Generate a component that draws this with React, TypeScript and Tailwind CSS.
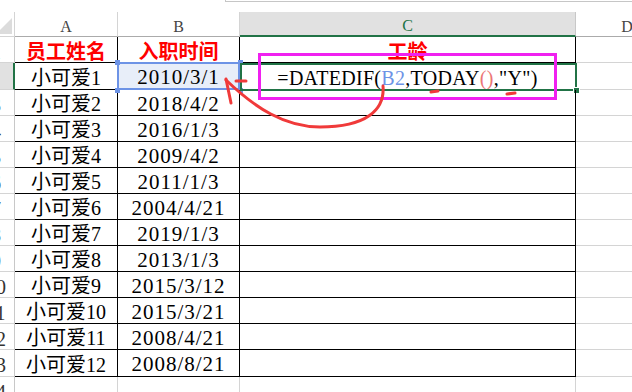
const serif = "font-['Liberation_Serif','Noto_Sans_CJK_SC',serif]";
const cjk = "font-['Noto_Sans_CJK_SC',sans-serif]";

const staff = [
  ['小可爱1', '2010/3/1'],
  ['小可爱2', '2018/4/2'],
  ['小可爱3', '2016/1/3'],
  ['小可爱4', '2009/4/2'],
  ['小可爱5', '2011/1/3'],
  ['小可爱6', '2004/4/21'],
  ['小可爱7', '2019/1/3'],
  ['小可爱8', '2013/1/3'],
  ['小可爱9', '2015/3/12'],
  ['小可爱10', '2015/3/21'],
  ['小可爱11', '2008/4/21'],
  ['小可爱12', '2008/8/21'],
];

// row heights in the sheet, row 1 first
const heights = [
  'h-[26px]', 'h-[27px]', 'h-[26px]', 'h-[26px]', 'h-[26px]', 'h-[26px]', 'h-[26px]',
  'h-[26px]', 'h-[26px]', 'h-[26px]', 'h-[26px]', 'h-[26px]', 'h-[27px]', 'h-[26px]',
];

const RowHead = ({ n, active }: { n: number; active?: boolean }) => (
  <div
    className={`flex w-[15px] shrink-0 justify-end overflow-hidden border-b border-b-[#d4d4d4] ${
      active ? 'border-r-2 border-r-[#217346] bg-[#e1e1e1]' : 'border-r border-r-[#c8c8c8]'
    }`}
  >
    <span className={`flex w-[36px] shrink-0 items-center justify-center pt-[4px] text-[20px] leading-none text-[#333] ${serif}`}>
      {n}
    </span>
  </div>
);

const ColHead = ({ label, w, active }: { label: string; w: string; active?: boolean }) => (
  <div
    className={`flex ${w} shrink-0 items-center justify-center pt-[5px] text-[16px] leading-none ${serif} ${
      active
        ? 'border-b-2 border-b-[#217346] border-r border-r-[#c8c8c8] bg-[#e1e1e1] text-[#217346]'
        : 'border-b border-b-[#ababab] border-r border-r-[#d4d4d4] text-[#444]'
    }`}
  >
    {label}
  </div>
);

const cell = 'flex shrink-0 items-center justify-center pt-[3px] leading-none';

export default function App() {
  return (
    <div className="relative h-[392px] w-[632px] overflow-hidden bg-white">
      {/* bottom edge of the formula bar */}
      <div className="h-[12px]">
        <div className="ml-[225px] h-[2px] border-b border-l border-[#c6c6c6]" />
      </div>

      {/* column letters */}
      <div className="flex h-[25px]">
        <div className="w-[15px] shrink-0 border-b border-r border-[#d4d4d4]">
          <svg width="15" height="24" viewBox="0 0 15 24">
            <polygon points="12,6 12,22 -4,22" fill="#dcdcdc" />
          </svg>
        </div>
        <ColHead label="A" w="w-[103px]" />
        <ColHead label="B" w="w-[122px]" />
        <ColHead label="C" w="w-[336px]" active />
        <ColHead label="D" w="w-[103px]" />
      </div>

      {/* header row */}
      <div className={`flex ${heights[0]}`}>
        <RowHead n={1} />
        <div className={`${cell} w-[103px] border-b border-r border-black text-[20px] font-bold text-[#ff0000] ${cjk}`}>员工姓名</div>
        <div className={`${cell} w-[122px] border-b border-r border-black text-[20px] font-bold text-[#ff0000] ${cjk}`}>入职时间</div>
        <div className={`${cell} w-[336px] border-b border-r border-black text-[20px] font-bold text-[#ff0000] ${cjk}`}>工龄</div>
        <div className="w-[103px] shrink-0 border-b border-[#d4d4d4]" />
      </div>

      {staff.map(([name, date], i) => {
        const first = i === 0;
        return (
          <div key={name} className={`flex ${heights[i + 1]}`}>
            <RowHead n={i + 2} active={first} />
            <div className={`${cell} w-[103px] border-b border-r border-black text-[20px] ${serif}`}>{name}</div>
            <div
              className={`${cell} relative w-[122px] border-b border-r border-black text-[21px] tracking-[1px] ${serif} ${
                first ? 'bg-[#e8eef9]' : ''
              }`}
            >
              {date}
              {first && (
                <>
                  <div className="absolute -left-px -top-px h-[28px] w-[123px] border-2 border-[#6d93e6]" />
                  <div className="absolute left-[-3px] top-[-3px] h-[5px] w-[5px] bg-[#6d93e6]" />
                  <div className="absolute left-[120px] top-[-3px] h-[5px] w-[5px] bg-[#6d93e6]" />
                  <div className="absolute left-[-3px] top-[25px] h-[5px] w-[5px] bg-[#6d93e6]" />
                  <div className="absolute left-[120px] top-[25px] h-[5px] w-[5px] bg-[#6d93e6]" />
                </>
              )}
            </div>
            <div className={`${cell} relative w-[336px] border-b border-r border-black text-[20px] ${serif}`}>
              {first && (
                <>
                  <span className="tracking-[0.3px]">
                    =DATEDIF(<span className="text-[#6d93e6]">B2</span>,TODAY
                    <span className="text-[#ec7676]">()</span>,"Y")
                  </span>
                  <div className="absolute left-0 top-0 h-[28px] w-[337px] border-2 border-[#217346]" />
                  <div className="absolute left-[333px] top-[24px] h-[7px] w-[7px] border border-white bg-[#217346]" />
                </>
              )}
            </div>
            <div className="w-[103px] shrink-0 border-b border-[#d4d4d4]" />
          </div>
        );
      })}

      {/* empty row below the table */}
      <div className={`flex ${heights[13]}`}>
        <RowHead n={14} />
        <div className="w-[103px] shrink-0 border-r border-[#d4d4d4]" />
        <div className="w-[122px] shrink-0 border-r border-[#d4d4d4]" />
        <div className="w-[336px] shrink-0 border-r border-[#d4d4d4]" />
      </div>

      {/* hand-drawn markup over the sheet */}
      <div className="absolute left-[258px] top-[53px] h-[47px] w-[299px] border-[3px] border-[#f020f0]" />
      <svg className="pointer-events-none absolute inset-0" width="632" height="392" viewBox="0 0 632 392">
        <g fill="none" stroke="#f03a3a" strokeWidth="3" strokeLinecap="round" strokeLinejoin="round">
          <path d="M383 86 C385 110 366 127 320 127 C285 127 255 108 226 80" />
          <path d="M226 79 L231 103" />
          <path d="M236 81 L246 81" />
          <path d="M431 92 L438 91" />
          <path d="M507 94 L515 93" />
        </g>
      </svg>
    </div>
  );
}
